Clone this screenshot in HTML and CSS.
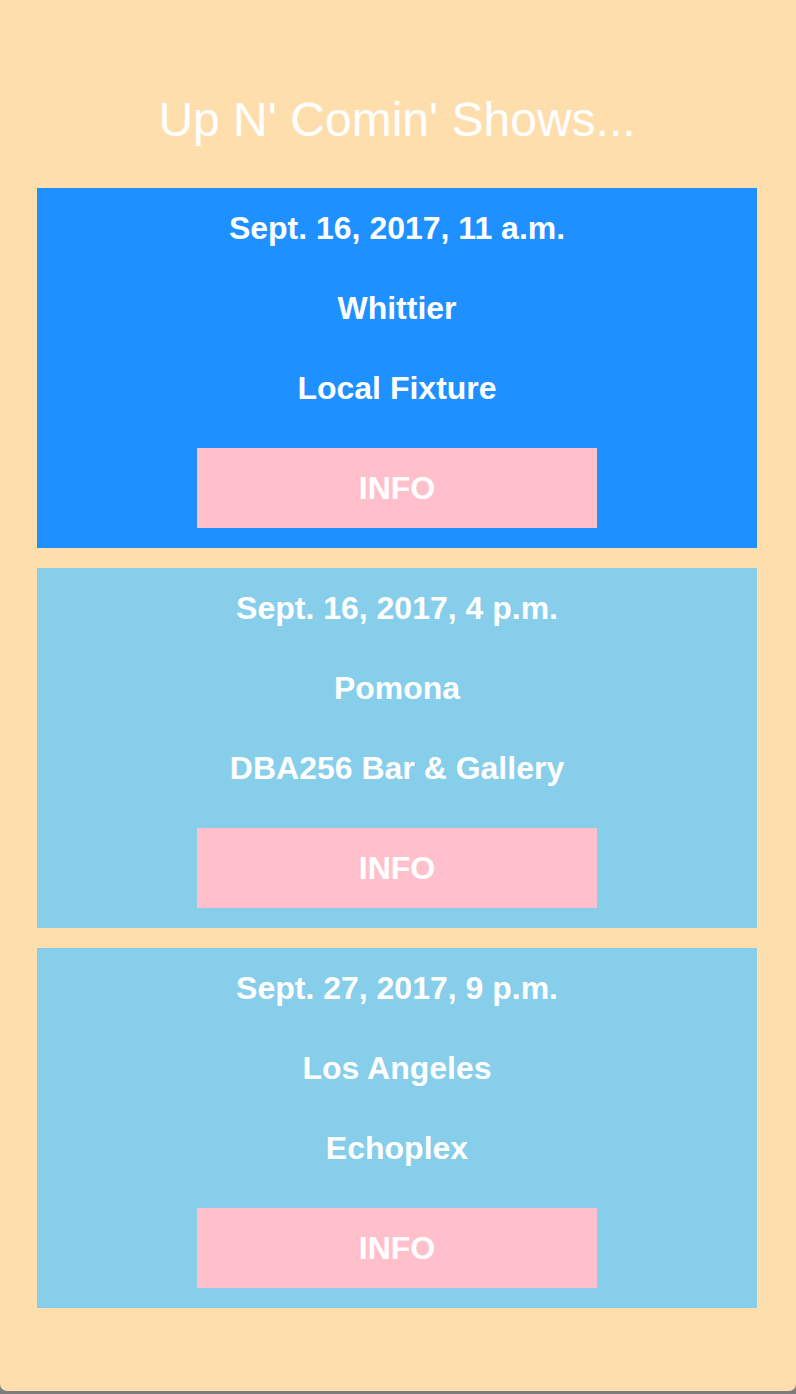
FILE: index.html
```html
<!DOCTYPE html>
<html lang="en">
<head>
<meta charset="utf-8">
<title>Up N' Comin' Shows</title>
<link rel="stylesheet" href="styles.css">
</head>
<body>
<div class="window">
  <h1 class="title">Up N' Comin' Shows...</h1>
  <div class="shows">
    <div class="show show-featured">
      <p class="line">Sept. 16, 2017, 11 a.m.</p>
      <p class="line">Whittier</p>
      <p class="line">Local Fixture</p>
      <a class="info">INFO</a>
    </div>
    <div class="show">
      <p class="line">Sept. 16, 2017, 4 p.m.</p>
      <p class="line">Pomona</p>
      <p class="line">DBA256 Bar &amp; Gallery</p>
      <a class="info">INFO</a>
    </div>
    <div class="show">
      <p class="line">Sept. 27, 2017, 9 p.m.</p>
      <p class="line">Los Angeles</p>
      <p class="line">Echoplex</p>
      <a class="info">INFO</a>
    </div>
  </div>
</div>
</body>
</html>
```
FILE: styles.css
```css
html, body {
  margin: 0;
  padding: 0;
  background: #7c7c7c;
}
body {
  height: 1394px;
  overflow: hidden;
  font-family: "Liberation Sans", Arial, Helvetica, sans-serif;
}
.window {
  box-sizing: border-box;
  height: 1391px;
  background: #ffdead;
  border-radius: 0 0 7px 7px;
  padding: 92px 39px 0 37px;
}
.title {
  margin: 0 0 40px;
  font-size: 48px;
  line-height: 56px;
  font-weight: normal;
  color: #ffffff;
  text-align: center;
}
.shows {
  display: flex;
  flex-direction: column;
  gap: 20px;
}
.show {
  background: #87ceeb;
  color: #ffffff;
  text-align: center;
  padding: 0 0 20px;
  display: flex;
  flex-direction: column;
  align-items: center;
}
.show-featured {
  background: #1e90ff;
}
.line {
  margin: 0;
  font-size: 32px;
  line-height: 80px;
  font-weight: bold;
}
.info {
  display: block;
  margin-top: 20px;
  width: 400px;
  height: 80px;
  background: #ffc0cb;
  color: #ffffff;
  font-size: 32px;
  line-height: 80px;
  font-weight: bold;
  text-align: center;
}
```
